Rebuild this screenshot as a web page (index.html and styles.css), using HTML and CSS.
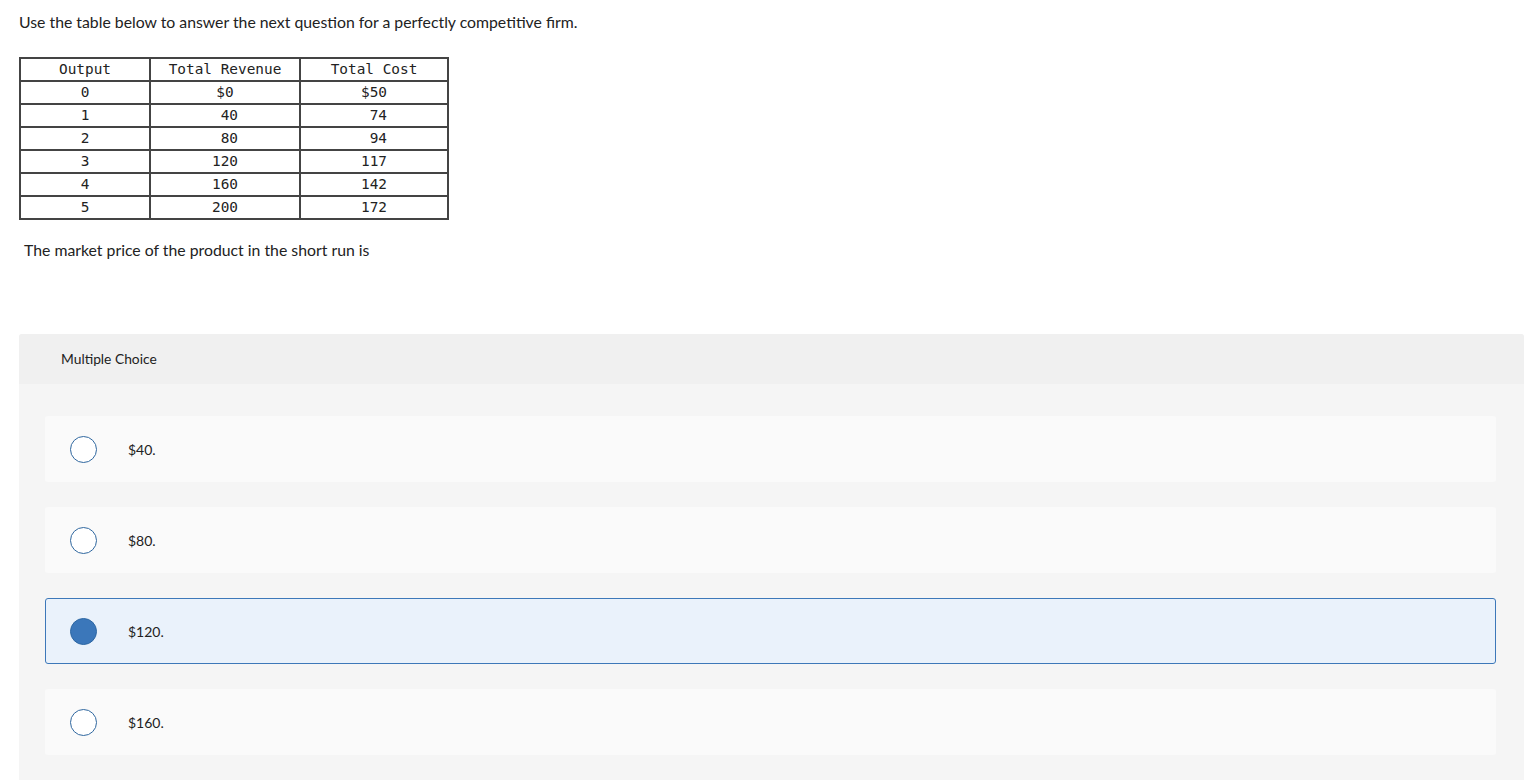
FILE: index.html
```html
<!DOCTYPE html>
<html>
<head>
<meta charset="utf-8">
<link rel="stylesheet" href="styles.css">
</head>
<body>
<div class="page">
  <p class="intro">Use the table below to answer the next question for a perfectly competitive firm.</p>
  <table class="data">
    <tr><td class="c1">Output</td><td class="c2">Total Revenue</td><td class="c3">Total Cost</td></tr>
    <tr><td>0</td><td>$0</td><td>$50</td></tr>
    <tr><td>1</td><td>&nbsp;40</td><td>&nbsp;74</td></tr>
    <tr><td>2</td><td>&nbsp;80</td><td>&nbsp;94</td></tr>
    <tr><td>3</td><td>120</td><td>117</td></tr>
    <tr><td>4</td><td>160</td><td>142</td></tr>
    <tr><td>5</td><td>200</td><td>172</td></tr>
  </table>
  <p class="question">The market price of the product in the short run is</p>
  <div class="panel">
    <div class="panel-head">Multiple Choice</div>
    <div class="panel-body">
      <div class="choice"><span class="radio"></span><span class="label">$40.</span></div>
      <div class="choice"><span class="radio"></span><span class="label">$80.</span></div>
      <div class="choice selected"><span class="radio"></span><span class="label">$120.</span></div>
      <div class="choice"><span class="radio"></span><span class="label">$160.</span></div>
    </div>
  </div>
</div>
</body>
</html>
```

FILE: styles.css
```css
html, body {
  margin: 0;
  padding: 0;
  background: #ffffff;
}
body {
  font-family: "Lato", "Open Sans", "Liberation Sans", sans-serif;
  color: #222;
}
.page {
  padding: 0 8px 0 19px;
}
.intro {
  margin: 0;
  padding-top: 12px;
  font-size: 15.8px;
  line-height: 19px;
  height: 19px;
}
.data {
  margin-top: 26px;
  border-collapse: collapse;
  border: 2px solid #444;
  font-family: "DejaVu Sans Mono", "Liberation Mono", monospace;
  font-size: 14.4px;
  color: #222;
}
.data td {
  border: 2px solid #444;
  text-align: center;
  height: 21px;
  padding: 0;
  line-height: 21px;
}
.data .c1 { width: 128px; }
.data .c2 { width: 148px; }
.data .c3 { width: 146px; }
.question {
  margin: 0;
  padding: 20px 0 0 5px;
  font-size: 15.8px;
  line-height: 19px;
}
.panel {
  margin-top: 75px;
  background: #f5f5f5;
  border-radius: 3px 3px 0 0;
  height: 500px;
}
.panel-head {
  background: #f0f0f0;
  border-radius: 3px 3px 0 0;
  height: 50px;
  line-height: 50px;
  padding-left: 42px;
  font-size: 13.8px;
  color: #222;
}
.panel-body {
  padding: 32px 28px 0 26px;
  display: flex;
  flex-direction: column;
  gap: 25px;
}
.choice {
  height: 66px;
  background: #fafafa;
  border-radius: 3px;
  display: flex;
  align-items: center;
  box-sizing: border-box;
  border: 1px solid transparent;
}
.choice.selected {
  background: #eaf2fb;
  border-color: #3d78b9;
}
.radio {
  width: 25px;
  height: 25px;
  border: 1.5px solid #2f679f;
  border-radius: 50%;
  background: #fff;
  margin-left: 24px;
  flex: none;
}
.choice.selected .radio {
  background: #3b77ba;
  border-color: #2d67a3;
}
.label {
  margin-left: 31px;
  font-size: 14px;
  color: #222;
}
```
